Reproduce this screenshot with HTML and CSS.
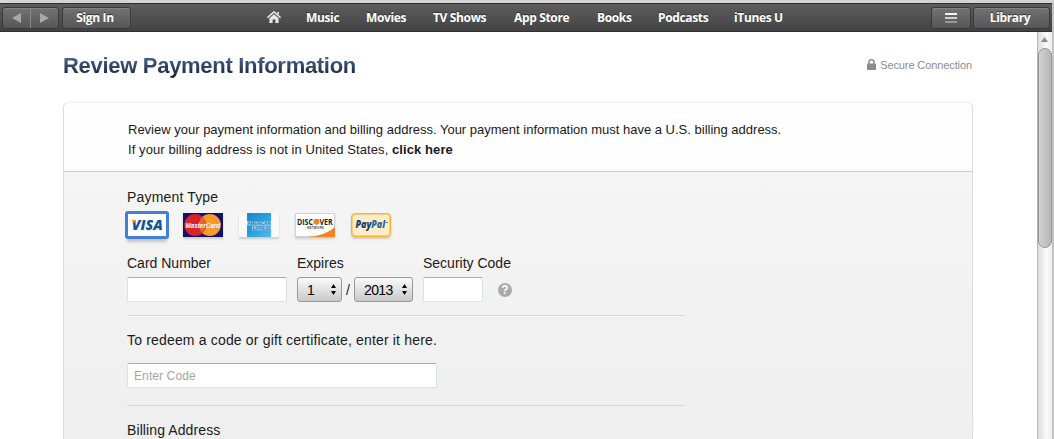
FILE: index.html
```html
<!DOCTYPE html>
<html lang="en">
<head>
    <meta charset="UTF-8">
    <title>Review Payment Information</title>
    <link rel="stylesheet" href="styles.css">
</head>
<body>
<header class="toolbar">
    <div class="history">
        <button type="button" aria-label="Back"><svg width="9" height="10"><path d="M9 0v10L0 5z"/></svg></button>
        <button type="button" aria-label="Forward"><svg width="9" height="10"><path d="M0 0v10l9-5z"/></svg></button>
    </div>
    <button type="button" class="bar-button sign-in">Sign In</button>
    <nav>
        <a class="home"><svg width="14" height="13" viewBox="0 0 14 13"><path d="M.4 6.6L7 .9l6.6 5.7" fill="none" stroke="#e6e6e6" stroke-width="1.6"/><path d="M10.3 1h1.7v3l-1.7-1.4z" fill="#e6e6e6"/><path d="M2.4 7.2L7 3.3l4.6 3.9V12H8.4V8.6H5.6V12H2.4z" fill="#e6e6e6"/></svg></a>
        <a>Music</a>
        <a>Movies</a>
        <a>TV Shows</a>
        <a>App Store</a>
        <a>Books</a>
        <a>Podcasts</a>
        <a>iTunes U</a>
    </nav>
    <button type="button" class="bar-button list" aria-label="List"><svg width="12" height="10"><path d="M0 0h12v2H0z" fill="#f4f4f4"/><path d="M0 4h12v2H0z" fill="#d0d0d0"/><path d="M0 8h12v2H0z" fill="#999"/></svg></button>
    <button type="button" class="bar-button library">Library</button>
</header>

<div class="view">
    <main>
        <div class="title-row">
            <h1>Review Payment Information</h1>
            <span class="secure"><svg width="9" height="11" viewBox="0 0 9 11"><path d="M2 5V3a2.5 2.2 0 0 1 5 0v2" fill="none" stroke="#8c8c8c" stroke-width="1.5"/><rect y="4.6" width="9" height="6.4" rx=".7" fill="#8c8c8c"/></svg>Secure Connection</span>
        </div>

        <section class="panel">
            <div class="intro">
                <p>Review your payment information and billing address. Your payment information must have a U.S. billing address.</p>
                <p class="outside">If your billing address is not in United States, <b>click here</b></p>
            </div>
            <form>
                <h2 class="type-label">Payment Type</h2>
                <div class="cards">
                    <span class="card selected"><svg width="40" height="24" viewBox="0 0 40 24"><rect width="40" height="24" fill="#fff"/><text x="4.8" y="17" class="visa" textLength="31" lengthAdjust="spacingAndGlyphs">VISA</text><path d="M3.5 6.8h4.3l1.4 4-2.6-2.4z" fill="#f0a21c"/></svg></span>
                    <span class="card"><svg width="40" height="24" viewBox="0 0 40 24"><rect width="40" height="24" fill="#13116b"/><circle cx="26.8" cy="12" r="11" fill="#f79a2d"/><circle cx="12.2" cy="12" r="11" fill="#d9232b"/><path d="M19.5 3.8a11 11 0 0 1 0 16.4 11 11 0 0 1 0-16.4z" fill="#e9622c"/><text x="2.5" y="14.8" class="mastercard" textLength="34.5" lengthAdjust="spacingAndGlyphs">MasterCard</text></svg></span>
                    <span class="card"><svg width="40" height="24" viewBox="0 0 40 24"><defs><linearGradient id="amex" x2="1" y2="1"><stop stop-color="#1686cd"/><stop offset=".5" stop-color="#2b9fdf"/><stop offset="1" stop-color="#55b9ec"/></linearGradient></defs><rect width="40" height="24" fill="#f9f9f9"/><rect x="8" width="24" height="24" fill="url(#amex)"/><rect x="8" y="8" width="24" height="4.4" fill="#a5d7f2"/><rect x="13" y="12.6" width="19" height="4.6" fill="#a5d7f2"/><g class="amex"><text x="8.5" y="12" textLength="23" lengthAdjust="spacingAndGlyphs">AMERICAN</text><text x="13.5" y="16.7" textLength="18" lengthAdjust="spacingAndGlyphs">EXPRESS</text></g></svg></span>
                    <span class="card"><svg width="40" height="24" viewBox="0 0 40 24"><rect x=".5" y=".5" width="39" height="23" fill="#fff" stroke="#d2d2d2"/><path d="M12 24Q30 23 40 14v10z" fill="#f58220"/><circle cx="21.4" cy="8.8" r="3" fill="#f58220"/><g class="discover"><text x="2" y="12" textLength="16" lengthAdjust="spacingAndGlyphs">DISC</text><text x="24.4" y="12" textLength="13.3" lengthAdjust="spacingAndGlyphs">VER</text></g><text x="12" y="15.7" class="network" textLength="17">NETWORK</text></svg></span>
                    <span class="card rounded"><svg width="40" height="24" viewBox="0 0 40 24"><rect x=".75" y=".75" width="38.5" height="22.5" rx="3.5" fill="#ffeccb" stroke="#fbb12b" stroke-width="1.5"/><g class="paypal"><text x="4.5" y="15" fill="#1b3d70" textLength="16" lengthAdjust="spacingAndGlyphs">Pay</text><text x="20.2" y="15" fill="#2a6c9c" textLength="14" lengthAdjust="spacingAndGlyphs">Pal</text></g><path d="M34.5 9.5h2.5" stroke="#5c83a0"/></svg></span>
                </div>

                <div class="fields">
                    <div class="field number">
                        <label for="number">Card Number</label>
                        <input type="text" id="number">
                    </div>
                    <div class="field expires">
                        <label>Expires</label>
                        <div class="dates">
                            <span class="select month">1<svg width="5" height="11"><path d="M2.5 0L5 4H0zM0 7h5l-2.5 4z"/></svg></span>
                            <span class="slash">/</span>
                            <span class="select year">2013<svg width="5" height="11"><path d="M2.5 0L5 4H0zM0 7h5l-2.5 4z"/></svg></span>
                        </div>
                    </div>
                    <div class="field security">
                        <label for="security">Security Code</label>
                        <div class="dates">
                            <input type="text" id="security">
                            <span class="help">?</span>
                        </div>
                    </div>
                </div>

                <div class="redeem">
                    <label for="code">To redeem a code or gift certificate, enter it here.</label>
                    <input type="text" id="code" placeholder="Enter Code">
                </div>

                <h2 class="billing">Billing Address</h2>
            </form>
        </section>
    </main>
    <div class="scrollbar">
        <svg width="7" height="5"><path d="M3.5 0L7 5H0z" fill="#8c8c8c"/></svg>
        <div class="thumb"></div>
    </div>
</div>
</body>
</html>
```
FILE: styles.css
```css
* {
    box-sizing: border-box;
}

body {
    display: flex;
    flex-direction: column;
    height: 439px;
    margin: 0;
    overflow: hidden;
    border-top: 3px solid #d6d6d6;
    border-right: 2px solid #c3c3c3;
    background: #fff;
    color: #1a1a1a;
    font-family: "Liberation Sans", Arial, sans-serif;
}

svg {
    display: block;
}

/* toolbar */
.toolbar {
    display: flex;
    flex: none;
    height: 29px;
    padding: 3px 2px 0;
    border-top: 1px solid #2f2f2f;
    border-bottom: 1px solid #303030;
    background: linear-gradient(#5d5d5d, #434343);
}

.toolbar button,
.toolbar nav {
    color: #fff;
    font: bold 12px "Open Sans", sans-serif;
    letter-spacing: -0.35px;
    text-shadow: 0 -1px 0 #333;
}

.history,
.bar-button {
    height: 22px;
    border: 1px solid #393939;
    border-radius: 3px;
    background: linear-gradient(#737373, #565656);
    box-shadow: inset 0 1px 0 #828282;
}

.history {
    display: flex;
    width: 57px;
    margin-right: 3px;
}

.history button {
    display: flex;
    flex: 1;
    align-items: center;
    justify-content: center;
    padding: 0;
    border: 0;
    background: none;
    fill: #a8a8a8;
}

.history button + button {
    border-left: 1px solid #898989;
}

.bar-button {
    display: flex;
    align-items: center;
    justify-content: center;
    padding: 0 0 2px;
}

.sign-in {
    width: 69px;
    padding-right: 3px;
}

nav {
    display: grid;
    flex: 1;
    grid-template-columns: 39px 60px 67px 81px 83px 61px 76px auto;
    align-items: center;
    height: 21px;
    padding-left: 136px;
    white-space: nowrap;
}

.list {
    width: 40px;
    margin-right: 2px;
}

.list svg {
    margin-top: 1px;
}

.library {
    width: 77px;
    padding-right: 3px;
}

/* page */
.view {
    display: flex;
    flex: 1;
    min-height: 0;
}

main {
    flex: 1;
    padding: 0 64px 0 63px;
}

.title-row {
    display: flex;
    align-items: center;
    justify-content: space-between;
    height: 67px;
    padding-right: 1px;
}

h1 {
    margin: 0;
    background: linear-gradient(#4d6a94 10%, #17233a 90%);
    -webkit-background-clip: text;
    background-clip: text;
    color: transparent;
    font-size: 22px;
    letter-spacing: -0.3px;
    line-height: 26px;
}

.secure {
    display: flex;
    gap: 4px;
    align-items: center;
    padding-bottom: 2px;
    color: #8c8c8c;
    font-size: 11px;
    letter-spacing: -0.1px;
}

.panel {
    height: 360px;
    margin-top: 3px;
    border: 1px solid #dedede;
    border-top-color: #f2f2f2;
    border-radius: 5px 5px 0 0;
    background: linear-gradient(#f5f5f5 68px, #eee);
    box-shadow: 0 0 2px #eee;
}

.intro {
    height: 69px;
    padding: 17px 64px 0;
    border-bottom: 1px solid #ccc;
    border-radius: 5px 5px 0 0;
    background: #fefefe;
    font-size: 13px;
    line-height: 20px;
    white-space: nowrap;
}

.intro p {
    margin: 0;
}

.intro .outside {
    letter-spacing: 0.08px;
}

form {
    padding: 16px 63px 0;
}

h2,
label {
    display: block;
    margin: 0;
    font-size: 14px;
    font-weight: normal;
    line-height: 18px;
    white-space: nowrap;
}

.type-label,
.redeem label {
    letter-spacing: 0.17px;
}

/* card logos */
.cards {
    display: flex;
    gap: 16px;
    height: 24px;
    margin-top: 7px;
}

.card {
    height: 24px;
    box-shadow: 0 2px 2px #ccc;
}

.card.selected {
    outline: 3px solid #4380d3;
    outline-offset: -1px;
    border-radius: 1px;
    box-shadow: 0 5px 3px #c4c4c4;
}

.card.rounded {
    border-radius: 4px;
}

.visa {
    fill: #12539b;
    font: italic 800 14px "Open Sans", sans-serif;
}

.mastercard {
    fill: #fff;
    font: italic bold 7px "Liberation Sans", sans-serif;
}

.amex {
    fill: #187bb8;
    font: bold 4.5px "Liberation Sans", sans-serif;
}

.discover {
    fill: #222;
    font: bold 8.5px "Open Sans", sans-serif;
}

.network {
    fill: #444;
    font: bold 3px "Liberation Sans", sans-serif;
}

.paypal {
    font: italic 800 10px "Open Sans", sans-serif;
}

/* fields */
.fields {
    display: flex;
    gap: 10px;
    width: 558px;
    height: 79px;
    padding-top: 17px;
    border-bottom: 1px solid #d8d8d8;
}

.field label {
    margin-bottom: 5px;
}

input {
    display: block;
    height: 25px;
    padding: 0 6px;
    border: 1px solid #dce0e9;
    border-top-color: #aaa;
    border-radius: 2px;
    background: #fff;
    font: 12px "Liberation Sans", Arial, sans-serif;
}

input::placeholder {
    color: #a5a5a5;
    letter-spacing: 0.1px;
}

.number input {
    width: 160px;
}

.expires {
    width: 116px;
}

.security input {
    width: 60px;
}

.dates {
    display: flex;
    align-items: center;
}

.select {
    display: flex;
    align-items: center;
    justify-content: space-between;
    height: 25px;
    padding: 0 5px 0 9px;
    border: 1px solid #999;
    border-radius: 3px;
    background: linear-gradient(#fafafa, #c9c9c9);
    color: #000;
    font-size: 14px;
    letter-spacing: -0.6px;
}

.month {
    width: 45px;
}

.year {
    width: 59px;
}

.slash {
    width: 12px;
    font-size: 14px;
    text-align: center;
}

.help {
    width: 14px;
    height: 14px;
    margin-left: 15px;
    border-radius: 50%;
    background: #aaa;
    color: #fff;
    font: bold 12px/14px "Liberation Sans", Arial, sans-serif;
    text-align: center;
}

.redeem {
    width: 558px;
    height: 90px;
    padding-top: 15px;
    border-bottom: 1px solid #d8d8d8;
}

.redeem input {
    width: 310px;
    margin-top: 14px;
}

.billing {
    padding-top: 15px;
    letter-spacing: 0.1px;
}

/* scrollbar */
.scrollbar {
    width: 15px;
    padding-top: 5px;
    border-left: 1px solid #b5b5b5;
    background: linear-gradient(90deg, #ddd, #fafafa 60%, #eee);
}

.scrollbar svg {
    margin-left: 3px;
}

.thumb {
    height: 200px;
    margin-top: 6px;
    border: 1px solid #969696;
    border-radius: 7px;
    background: linear-gradient(90deg, #d2d2d2, #b5b5b5);
}
```
